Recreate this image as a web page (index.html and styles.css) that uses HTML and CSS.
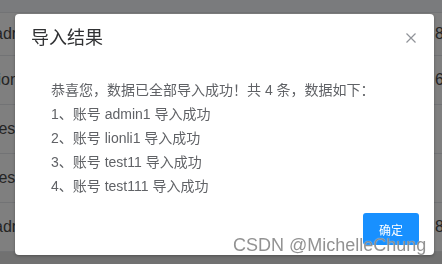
FILE: index.html
```html
<!DOCTYPE html>
<html>
<head>
  <meta charset="utf-8">
  <title>导入结果</title>
  <link rel="stylesheet" href="styles.css">
</head>
<body>
  <!-- table behind the modal -->
  <div class="table">
    <div class="thead"></div>
    <div class="row first"><span class="cell-l">admin1</span><span class="cell-r">8</span></div>
    <div class="row"><span class="cell-l">lionli1</span><span class="cell-r">6</span></div>
    <div class="row"><span class="cell-l">test11</span><span class="cell-r"></span></div>
    <div class="row"><span class="cell-l">test111</span><span class="cell-r"></span></div>
    <div class="row"><span class="cell-l">admin</span><span class="cell-r">8</span></div>
    <div class="row foot"></div>
  </div>

  <div class="mask"></div>

  <div class="dialog">
    <div class="dialog-header">
      <span class="dialog-title">导入结果</span>
      <button class="dialog-close" aria-label="关闭">
        <svg width="10" height="10" viewBox="0 0 10 10">
          <path d="M0.5 0.5 L9.5 9.5 M9.5 0.5 L0.5 9.5" stroke="#909399" stroke-width="1.2" fill="none"/>
        </svg>
      </button>
    </div>
    <div class="dialog-body">
      <div>恭喜您，数据已全部导入成功！共 4 条，数据如下：</div>
      <div>1、账号 admin1 导入成功</div>
      <div>2、账号 lionli1 导入成功</div>
      <div>3、账号 test11 导入成功</div>
      <div>4、账号 test111 导入成功</div>
    </div>
    <div class="dialog-footer">
      <button class="btn-primary">确定</button>
    </div>
  </div>

  <div class="watermark">CSDN @MichelleChung</div>
</body>
</html>
```

FILE: styles.css
```css
html, body { margin:0; padding:0; }

body
{
  width:442px;
  height:264px;
  overflow:hidden;
  background:#fff;
  font-family:"Liberation Sans", "Noto Sans CJK SC", sans-serif;
}

/* background table */
.table { display:flex; flex-direction:column; }
.thead { height:12px; background:#f5f7fa; border-bottom:1px solid #e4e6eb; }
.row
{
  height:48px;
  border-bottom:1px solid #e4e6eb;
  display:flex;
  align-items:center;
  justify-content:space-between;
  font-size:16px;
  color:#4a4a4a;
}
.row.first { height:42px; }
.row.foot { height:20px; background:#e2e2e2; border:none; }
.cell-l { margin-left:-6px; }
.cell-r { margin-right:-2px; }

.mask
{
  position:fixed;
  inset:0;
  background:rgba(0,0,0,.5);
}

/* modal */
.dialog
{
  position:absolute;
  left:15px;
  top:14px;
  width:419px;
  height:241px;
  background:#fff;
  border-radius:4px;
  box-shadow:0 1px 3px rgba(0,0,0,.3);
  display:flex;
  flex-direction:column;
  font-family:"Liberation Sans", "Noto Sans CJK SC", sans-serif;
}
.dialog-header
{
  display:flex;
  align-items:center;
  justify-content:space-between;
  padding:12px 18px 0 16px;
  height:24px;
}
.dialog-title
{
  font-size:18px;
  line-height:24px;
  color:#303133;
}
.dialog-close
{
  border:none;
  background:none;
  padding:0;
  width:10px;
  height:10px;
  display:flex;
}
.dialog-body
{
  flex:1;
  padding:28px 20px 0 36px;
  font-size:14px;
  line-height:24px;
  color:#606266;
}
.dialog-footer
{
  display:flex;
  justify-content:flex-end;
  padding:0 15px 10px;
}
.btn-primary
{
  width:56px;
  height:32px;
  border:none;
  border-radius:3px;
  background:#1890ff;
  color:#fff;
  font-size:12px;
  font-family:"Noto Sans CJK SC", sans-serif;
  padding:0;
}

.watermark
{
  position:absolute;
  left:233px;
  top:236px;
  font-size:18px;
  line-height:18px;
  color:rgba(110,110,110,.75);
  text-shadow:0 0 1px rgba(255,255,255,.9);
  white-space:nowrap;
}
```
